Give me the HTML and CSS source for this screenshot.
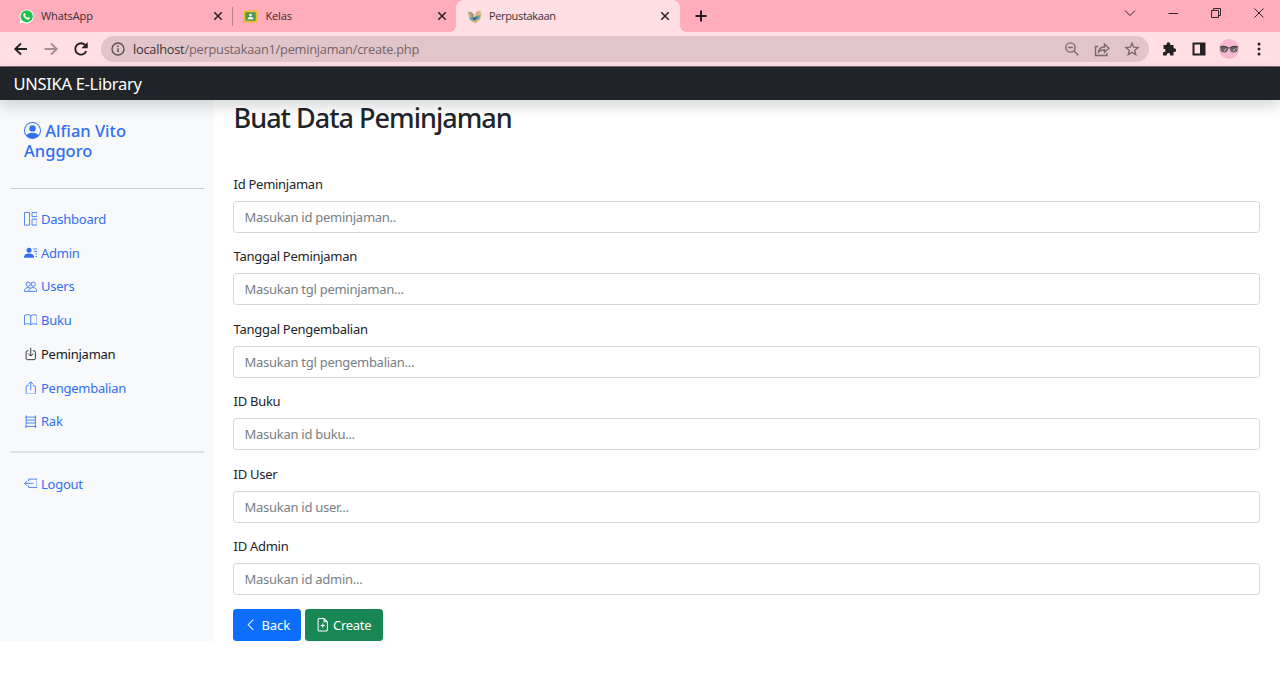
FILE: index.html
```html
<!DOCTYPE html>
<html lang="id">
<head>
<meta charset="utf-8">
<title>Perpustakaan</title>
<link rel="stylesheet" href="styles.css">
</head>
<body>
<div class="tabstrip">
  <div class="tab tab-first">
    <svg class="favicon" viewBox="0 0 16 16"><path d="M.6 15.4 1.7 11.6A7.4 7.4 0 1 1 4.5 14.4Z" fill="#fff"/><circle cx="8.2" cy="7.8" r="6.5" fill="#1fc14a"/><path d="M5.3 4.4c.6-.5 1-.2 1.2.2l.5 1.2c.1.4-.6.9-.6 1.1.5 1.1 1.4 1.9 2.5 2.4.4 0 .8-1 1.200-.8l1.300.7c.4.2.2 1-.2 1.400-1.200 1.200-3.200.3-4.600-.8C4.800 8.500 3.700 6 5.300 4.400z" fill="#fff"/></svg>
    <span class="tab-title">WhatsApp</span>
    <svg class="tab-close" viewBox="0 0 10 10"><path d="M1.300 1.300 8.700 8.700M8.700 1.300 1.300 8.700"/></svg>
  </div>
  <div class="tab tab-second">
    <svg class="favicon" viewBox="0 0 16 16"><rect x=".5" y="1.500" width="15" height="13" rx="1" fill="#f0bd2c"/><rect x="2.500" y="3.500" width="11" height="9" fill="#4a9850"/><circle cx="8" cy="6.500" r="1.500" fill="#fff"/><path d="M4.700 11c0-1.800 1.600-2.500 3.300-2.500s3.300.7 3.300 2.500z" fill="#fff"/></svg>
    <span class="tab-title">Kelas</span>
    <svg class="tab-close" viewBox="0 0 10 10"><path d="M1.300 1.300 8.700 8.700M8.700 1.300 1.300 8.700"/></svg>
  </div>
  <div class="tab tab-active">
    <svg class="favicon" viewBox="0 0 16 16"><path d="M.5 3.500 4 4l4 3.500L14.500 2l1 4-1 5-4 3.500-5-.5-3-3z" fill="#d8c48a"/><path d="m1 3 4 .5 3 3-3 2z" fill="#a19a7d"/><path d="m9 4 4-2.500L14.500 3l-5 4z" fill="#dfa98a"/><path d="m3 8 5 2.500L14.500 6 13 10l-5 3-5-2z" fill="#5f9ab5"/><path d="m5 7.500 3 1.700 4.500-3L8 12z" fill="#285267"/><path d="m4 12 5 1.500 4-2-4 4z" fill="#e3b266"/></svg>
    <span class="tab-title">Perpustakaan</span>
    <svg class="tab-close" viewBox="0 0 10 10"><path d="M1.300 1.300 8.700 8.700M8.700 1.300 1.300 8.700"/></svg>
  </div>
  <svg class="new-tab" viewBox="0 0 12 12"><path d="M6 .5v11M.5 6h11"/></svg>
  <div class="window-controls">
    <svg viewBox="0 0 12 12"><path d="m1 3.500 5 5 5-5"/></svg>
    <svg viewBox="0 0 12 12"><path d="M1.500 6.500h9.500"/></svg>
    <svg viewBox="0 0 12 12"><path d="M1.500 3.500h7v7h-7zM3.500 3.500v-2h7v7h-2"/></svg>
    <svg viewBox="0 0 12 12"><path d="m1.500 1.500 9 9M10.500 1.500l-9 9"/></svg>
  </div>
</div>
<div class="toolbar">
  <div class="history">
    <svg viewBox="0 0 16 16"><path d="M14 8H2.500M8 2.500 2.300 8 8 13.500"/></svg>
    <svg class="disabled" viewBox="0 0 16 16"><path d="M1.500 8h12M8 2.500 13.700 8 8 13.500"/></svg>
    <svg viewBox="0 0 16 16"><path d="M13.200 10.200A5.700 5.700 0 1 1 12.200 4.100L14 6"/><path class="solid" d="M14.700 1v6.300H8.400z"/></svg>
  </div>
  <div class="address">
    <svg class="info" viewBox="0 0 14 14"><circle cx="7" cy="7" r="6"/><path d="M7 6.200v4M7 3.600v1.500"/></svg>
    <span class="url"><b>localhost</b>/perpustakaan1/peminjaman/create.php</span>
    <div class="address-actions">
      <svg viewBox="0 0 16 16"><circle cx="6.500" cy="6.500" r="4.600"/><path d="M4.300 6.500h4.400M10 10l4.300 4.300"/></svg>
      <svg viewBox="0 0 16 16"><path d="M4 5.500H1.500v9h11.500v-2.500M4.500 11c.4-3.600 2.600-5 6-5V3l4.500 4.200-4.500 4V8.700c-2.600 0-4.500.6-6 2.300z"/></svg>
      <svg viewBox="0 0 16 16"><path d="m8 2.200 1.700 4 4.300.4-3.300 2.800 1 4.200L8 11.400l-3.700 2.200 1-4.200L2 6.600l4.300-.4z"/></svg>
    </div>
  </div>
  <div class="extensions">
    <svg viewBox="0 0 16 16"><path class="solid" d="M2.500 4h3V3.200a1.900 1.900 0 0 1 3.800 0V4h3.200v3.300h.7a1.900 1.900 0 0 1 0 3.800h-.7v3.400H9.200v-.8a1.700 1.700 0 0 0-3.400 0v.8H2v-3.300h.8a1.700 1.700 0 0 0 0-3.400H2.500z"/></svg>
    <svg viewBox="0 0 16 16"><path class="solid" fill-rule="evenodd" d="M1.500 1.500h13v13h-13zM3.500 3.500v9h5.500v-9z"/></svg>
    <svg class="avatar" viewBox="0 0 20 20"><circle cx="10" cy="10" r="10" fill="#f8b7cf"/><ellipse cx="5.200" cy="10.300" rx="3.800" ry="3.200" fill="#6c6267"/><ellipse cx="14.800" cy="10.300" rx="3.800" ry="3.200" fill="#6c6267"/><path d="M1 8.300q4-2 8 .7h2q4-2.700 8-.7" fill="none" stroke="#443b3f" stroke-width="1.200"/><path d="m5 12 2.500-2.500M14 12l2.500-2.500" stroke="#cfc2c8"/></svg>
    <svg viewBox="0 0 16 16"><circle class="solid" cx="8" cy="3" r="1.500"/><circle class="solid" cx="8" cy="8" r="1.500"/><circle class="solid" cx="8" cy="13" r="1.500"/></svg>
  </div>
</div>
<header class="navbar"><a class="brand">UNSIKA E-Library</a></header>
<div class="layout">
  <aside class="sidebar">
    <h6 class="profile"><svg viewBox="0 0 16 16"><path class="solid" d="M11 6a3 3 0 1 1-6 0 3 3 0 0 1 6 0z"/><path class="solid" fill-rule="evenodd" d="M0 8a8 8 0 1 1 16 0A8 8 0 0 1 0 8zm8-7a7 7 0 0 0-5.468 11.370C3.242 11.226 4.805 10 8 10s4.757 1.225 5.468 2.370A7 7 0 0 0 8 1z"/></svg> Alfian Vito Anggoro</h6>
    <hr>
    <nav class="menu">
      <a><svg viewBox="0 0 16 16"><path d="M.5.5h6v15h-6zM9.500.5h6v5h-6zM9.500 8.500h6v7h-6z"/></svg>Dashboard</a>
      <a><svg viewBox="0 0 16 16"><path class="solid" d="M6 8a3 3 0 1 0 0-6 3 3 0 0 0 0 6zm-5 6s-1 0-1-1 1-4 6-4 6 3 6 4-1 1-1 1H1z"/><path d="M11 3.500h4.500M11.500 6.500h4M13.500 9.500h2M13.500 12.500h2"/></svg>Admin</a>
      <a><svg viewBox="0 0 16 16"><circle cx="5" cy="5" r="2.500"/><circle cx="11" cy="5" r="2.500"/><path d="M.5 13.500c0-3 2-4.500 4.500-4.500 1.500 0 2.500.5 3.300 1.300M5.500 13.500c0-3 2.500-4.500 5-4.500s5 1.500 5 4.500zM.5 13.500h5"/></svg>Users</a>
      <a><svg viewBox="0 0 16 16"><path d="M8 3.200C6 1.800 3 1.800.5 2.800v10.700c2.500-1 5.500-1 7.500.3 2-1.300 5-1.300 7.500-.3V2.800C13 1.800 10 1.800 8 3.200zM8 3.200v10.600"/></svg>Buku</a>
      <a class="current"><svg viewBox="0 0 16 16"><path d="M5.500 4.500H4A1.500 1.500 0 0 0 2.500 6v7.500A1.500 1.500 0 0 0 4 15h8a1.500 1.500 0 0 0 1.500-1.500V6A1.500 1.500 0 0 0 12 4.500h-1.500M8 1v9.500M5 7.700l3 3 3-3"/></svg>Peminjaman</a>
      <a><svg viewBox="0 0 16 16"><path d="M5.500 5.500H4A1.500 1.500 0 0 0 2.500 7v7A1.500 1.500 0 0 0 4 15.500h8a1.500 1.500 0 0 0 1.500-1.500V7A1.500 1.500 0 0 0 12 5.500h-1.500M8 11V1M5 4l3-3 3 3"/></svg>Pengembalian</a>
      <a><svg viewBox="0 0 16 16"><path d="M2.500.5v15M13.500.5v15M1.500 2.500h13M2.500 6h11M2.500 9.500h11M1.500 13.500h13"/></svg>Rak</a>
    </nav>
    <hr class="thick">
    <nav class="menu">
      <a><svg viewBox="0 0 16 16"><path d="M5.500 5V2.500h10v10h-10V10M11 7.500H.8M3.800 4.500l-3 3 3 3"/></svg>Logout</a>
    </nav>
  </aside>
  <main class="content">
    <h2>Buat Data Peminjaman</h2>
    <form class="form">
      <div class="field"><label for="f1">Id Peminjaman</label><input id="f1" placeholder="Masukan id peminjaman.."></div>
      <div class="field"><label for="f2">Tanggal Peminjaman</label><input id="f2" placeholder="Masukan tgl peminjaman..."></div>
      <div class="field"><label for="f3">Tanggal Pengembalian</label><input id="f3" placeholder="Masukan tgl pengembalian..."></div>
      <div class="field"><label for="f4">ID Buku</label><input id="f4" placeholder="Masukan id buku..."></div>
      <div class="field"><label for="f5">ID User</label><input id="f5" placeholder="Masukan id user..."></div>
      <div class="field"><label for="f6">ID Admin</label><input id="f6" placeholder="Masukan id admin..."></div>
      <div class="actions">
        <a class="btn btn-back"><svg viewBox="0 0 16 16"><path d="m11 2-6 6 6 6"/></svg>Back</a>
        <a class="btn btn-create"><svg viewBox="0 0 16 16"><path d="M9.500.7H4A1.500 1.500 0 0 0 2.500 2.200v11.600A1.500 1.500 0 0 0 4 15.300h8a1.500 1.500 0 0 0 1.500-1.500V4.500zM9.500.7v3.800h4M8 6.500v5M5.500 9h5"/></svg>Create</a>
      </div>
    </form>
  </main>
</div>
</body>
</html>
```
FILE: styles.css
```css
* { box-sizing: border-box; }
body {
  margin: 0;
  height: 682px;
  overflow: hidden;
  background: #fff;
  color: #212529;
  font: 13px/20px "Noto Sans", sans-serif;
}
svg { display: block; flex: none; fill: none; stroke: currentColor; }
.solid { fill: currentColor; stroke: none; }

/* Browser chrome */
.tabstrip {
  display: flex;
  height: 32px;
  background: #ffadbb;
  color: #3d2a30;
  font: 11px/32px "Open Sans", sans-serif;
}
.tab { display: flex; align-items: center; height: 32px; }
.tab-first { width: 232.500px; padding: 0 10px 0 19px; background: linear-gradient(#b98189, #b98189) right center / 1px 19px no-repeat; }
.tab-second { width: 223.500px; padding: 0 9.500px 0 10px; }
.tab-second .tab-title { letter-spacing: -.15px; }
.tab-active {
  position: relative;
  width: 224px;
  padding: 0 10px 0 11px;
  border-radius: 8px 8px 0 0;
  background: #ffdee4;
  color: #3a2f32;
}
.tab-active .tab-title { letter-spacing: -.35px; }
.tab-active::before, .tab-active::after {
  content: "";
  position: absolute;
  bottom: 0;
  width: 6px;
  height: 6px;
}
.tab-active::before { left: -6px; background: radial-gradient(circle at 0 0, transparent 5.500px, #ffdee4 6px); }
.tab-active::after { right: -6px; background: radial-gradient(circle at 100% 0, transparent 5.500px, #ffdee4 6px); }
.tab-first .tab-title { letter-spacing: -.1px; }
.favicon { width: 15px; height: 15px; margin-right: 7px; stroke: none; }
.tab-second .favicon { margin-right: 8px; }
.tab-title { flex: 1; }
.tab-close { width: 10px; height: 10px; stroke: #30242a; stroke-width: 1.6; }
.new-tab { width: 12px; height: 12px; margin: 10px 0 0 15px; stroke: #241c1f; stroke-width: 2; }
.window-controls { display: flex; gap: 31px; margin-left: auto; padding: 7px 15.500px 0 0; color: #33262a; }
.window-controls svg { width: 12px; height: 12px; }
.toolbar {
  display: flex;
  align-items: center;
  height: 34px;
  padding-left: 12.500px;
  background: #ffdee4;
  color: #252122;
}
.history { display: flex; gap: 14px; width: 88.500px; }
.history svg { width: 16px; height: 16px; stroke-width: 1.9; }
.history .disabled { color: #a58f95; }
.address {
  display: flex;
  align-items: center;
  width: 1048px;
  height: 26px;
  padding: 0 9px 0 10px;
  border-radius: 13px;
  background: #e1c5ca;
  color: #756367;
}
.info { width: 14px; height: 14px; margin-right: 8px; color: #5c5053; stroke-width: 1.4; }
.url { flex: 1; font: 12.8px/26px "Open Sans", sans-serif; letter-spacing: -.24px; }
.url b { font-weight: 400; color: #3b3436; }
.address-actions { display: flex; gap: 14px; color: #7a686d; }
.address-actions svg { width: 16px; height: 16px; stroke-width: 1.4; }
.extensions { display: flex; align-items: center; gap: 12px; padding-left: 12px; }
.extensions svg { width: 16px; height: 16px; }
.extensions svg:nth-child(2) { margin-left: 2px; }
.extensions .avatar { width: 20px; height: 20px; stroke: none; }

/* Page header */
.navbar {
  position: relative;
  z-index: 1;
  display: flex;
  align-items: center;
  height: 34px;
  padding: 1px 13.500px 0;
  border-top: 1px solid #76686d;
  background: #212529;
  box-shadow: 0 7px 14px rgba(0, 0, 0, .15);
}
.brand { color: #fff; font-size: 16.500px; letter-spacing: -.3px; }

.layout { display: flex; height: 541px; }

/* Sidebar */
.sidebar { width: 213.500px; padding: 21px 10px 0; background: #f8f9fa; color: #316fee; letter-spacing: -.25px; }
.profile { margin: 0 14px; font-size: 16.500px; line-height: 20px; font-weight: 500; letter-spacing: 0; }
.profile svg { display: inline-block; width: 17px; height: 17px; vertical-align: -2px; }
.sidebar hr { height: 1px; margin: 27px 0 13px; border: 0; background: #c6c8ca; }
.sidebar .thick { height: 2px; margin: 12.500px 0 14px; background: #dfe0e2; }
.menu a {
  display: flex;
  align-items: center;
  gap: 4px;
  height: 33.750px;
  padding-left: 13.500px;
}
.menu svg { width: 13.500px; height: 13.500px; }
.menu .current { color: #151719; }

/* Form */
.content { flex: 1; padding: 2px 20.500px 0 19.500px; }
.content h2 { margin: 0 0 39.500px; padding-left: .5px; font-size: 27px; line-height: 32px; font-weight: 500; letter-spacing: -.98px; }
.form { display: flex; flex-direction: column; letter-spacing: -.27px; }
.field { display: flex; flex-direction: column; height: 72.560px; }
.field label { height: 27px; padding-left: .5px; line-height: 21px; }
.field input {
  height: 32px;
  padding: 0 10.500px;
  border: 1px solid #d4d8dc;
  border-radius: 3.400px;
  font: 13px/20px "Noto Sans", sans-serif;
  letter-spacing: -.27px;
}
.field input::placeholder { color: #777e84; opacity: 1; }
.actions { display: flex; gap: 4px; }
.btn {
  display: flex;
  align-items: center;
  height: 32px;
  gap: 4px;
  padding: 0 11px;
  border-radius: 3.400px;
  color: #fff;
}
.btn svg { width: 13.500px; height: 13.500px; stroke-width: 1.2; }
.btn-back { width: 67.500px; background: #0d6efd; letter-spacing: -.1px; }
.btn-create { width: 78px; background: #198754; }
```
